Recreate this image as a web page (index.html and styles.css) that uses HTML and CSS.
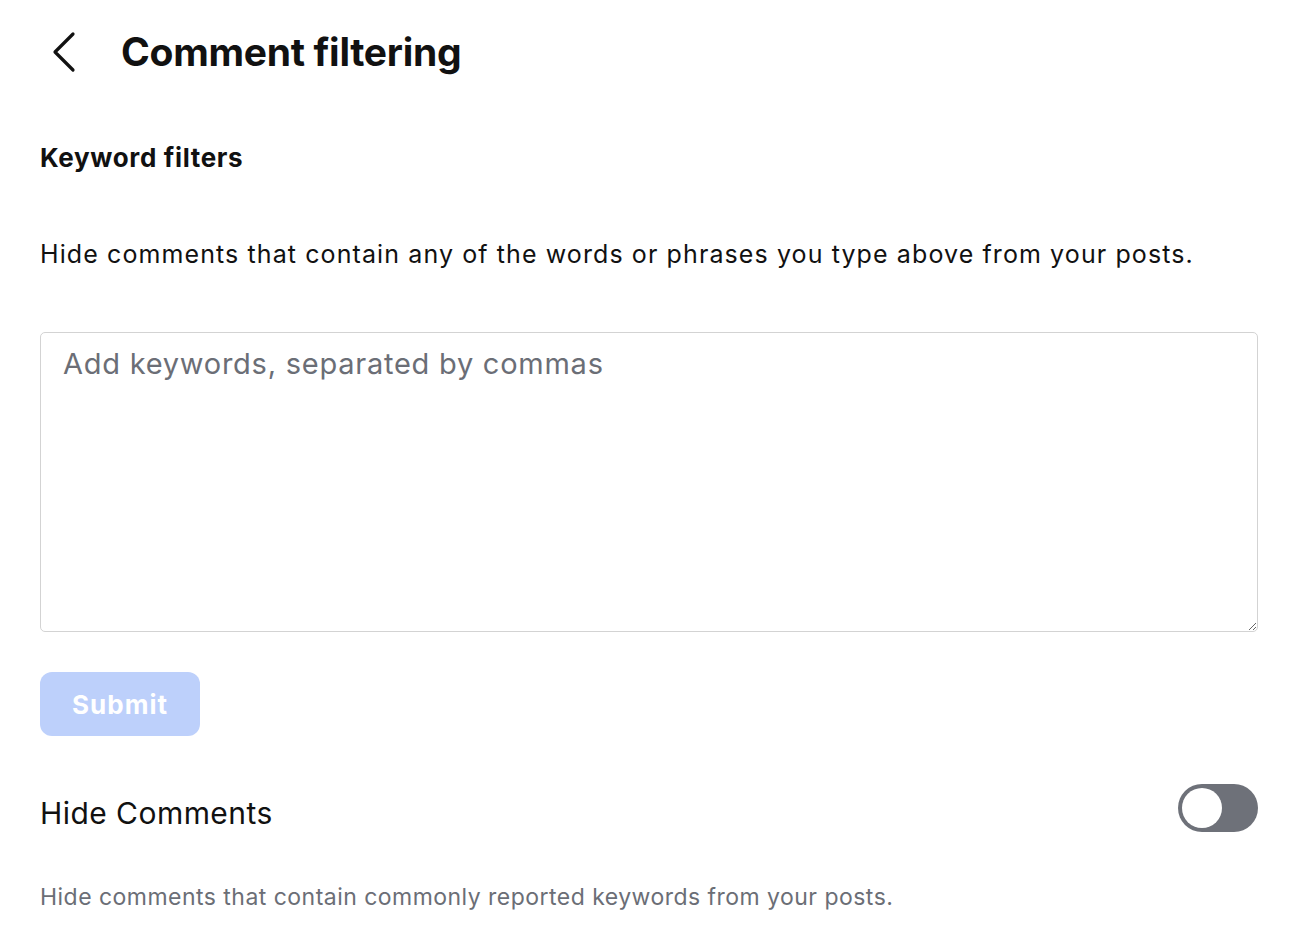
FILE: index.html
```html
<!DOCTYPE html>
<html lang="en">
<head>
<meta charset="utf-8">
<title>Comment filtering</title>
<link rel="stylesheet" href="styles.css">
</head>
<body>
<main class="page">
  <header class="header">
    <button class="back" aria-label="Back">
      <svg width="26" height="42" viewBox="0 0 26 42" fill="none" stroke="#111" stroke-width="3.2" stroke-linecap="round" stroke-linejoin="round">
        <path d="M22 3 L4 21 L22 39"/>
      </svg>
    </button>
    <h1 class="title">Comment filtering</h1>
  </header>

  <h2 class="section-title">Keyword filters</h2>
  <p class="desc">Hide comments that contain any of the words or phrases you type above from your posts.</p>

  <textarea class="keywords" placeholder="Add keywords, separated by commas"></textarea>

  <button class="submit" disabled>Submit</button>

  <div class="row">
    <span class="row-label">Hide Comments</span>
    <span class="toggle"><span class="knob"></span></span>
  </div>
  <p class="hint">Hide comments that contain commonly reported keywords from your posts.</p>
</main>
</body>
</html>
```

FILE: styles.css
```css
* { box-sizing: border-box; }
html, body { margin: 0; background: #fff; }
body {
  font-family: Inter, "Noto Sans", "Liberation Sans", sans-serif;
  color: #111;
}
.page {
  padding: 28px 32px 0 40px;
  display: flex;
  flex-direction: column;
}
.header {
  display: flex;
  align-items: center;
  height: 48px;
}
.back {
  border: 0;
  background: none;
  padding: 0;
  margin-left: 11px;
  width: 26px;
  height: 42px;
  display: flex;
  cursor: pointer;
}
.title {
  margin: 0 0 0 44px;
  font-size: 39px;
  font-weight: 700;
  line-height: 48px;
  letter-spacing: -0.3px;
}
.section-title {
  margin: 67px 0 0 0;
  font-size: 26px;
  line-height: 30px;
  font-weight: 700;
  letter-spacing: 0.65px;
}
.desc {
  margin: 66px 0 0 0;
  font-size: 25px;
  line-height: 30px;
  font-weight: 400;
  letter-spacing: 1.1px;
}
.keywords {
  margin-top: 63px;
  width: 100%;
  height: 300px;
  border: 1.5px solid #d3d3d3;
  border-radius: 5px;
  padding: 14px 22px;
  font-family: inherit;
  font-size: 29px;
  line-height: 34px;
  letter-spacing: 0.75px;
  color: #111;
  resize: vertical;
  outline: none;
}
.keywords::placeholder { color: #6b6e76; }
.submit {
  margin-top: 40px;
  align-self: flex-start;
  width: 160px;
  height: 64px;
  border: 0;
  border-radius: 12px;
  background: #bdd0fb;
  color: #fff;
  font-family: inherit;
  font-size: 26px;
  font-weight: 700;
  letter-spacing: 1px;
}
.row {
  margin-top: 48px;
  display: flex;
  align-items: center;
  justify-content: space-between;
  height: 48px;
}
.row-label {
  font-size: 30px;
  line-height: 36px;
  padding-top: 10px;
  letter-spacing: 0.45px;
}
.toggle {
  width: 80px;
  height: 48px;
  border-radius: 24px;
  background: #6e7179;
  display: flex;
  align-items: center;
  padding: 4px;
}
.knob {
  width: 40px;
  height: 40px;
  border-radius: 50%;
  background: #fff;
}
.hint {
  margin: 50px 0 0 0;
  font-size: 23px;
  line-height: 30px;
  color: #6b6e76;
  letter-spacing: 0.47px;
}
```
